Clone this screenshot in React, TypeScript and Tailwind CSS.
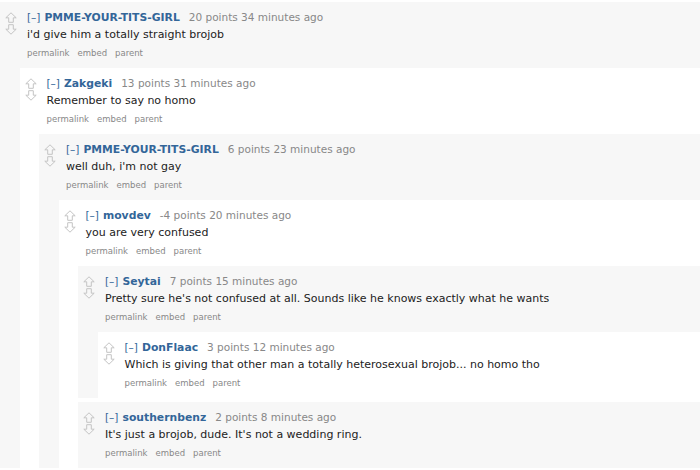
import React from 'react';

type CommentData = {
  id: string;
  author: string;
  points: number;
  age: string;
  body: string;
  replies?: CommentData[];
};

const thread: CommentData = {
  id: 'c1',
  author: 'PMME-YOUR-TITS-GIRL',
  points: 20,
  age: '34 minutes ago',
  body: "i'd give him a totally straight brojob",
  replies: [
    {
      id: 'c2',
      author: 'Zakgeki',
      points: 13,
      age: '31 minutes ago',
      body: 'Remember to say no homo',
      replies: [
        {
          id: 'c3',
          author: 'PMME-YOUR-TITS-GIRL',
          points: 6,
          age: '23 minutes ago',
          body: "well duh, i'm not gay",
          replies: [
            {
              id: 'c4',
              author: 'movdev',
              points: -4,
              age: '20 minutes ago',
              body: 'you are very confused',
              replies: [
                {
                  id: 'c5',
                  author: 'Seytai',
                  points: 7,
                  age: '15 minutes ago',
                  body: "Pretty sure he's not confused at all. Sounds like he knows exactly what he wants",
                  replies: [
                    {
                      id: 'c6',
                      author: 'DonFlaac',
                      points: 3,
                      age: '12 minutes ago',
                      body: 'Which is giving that other man a totally heterosexual brojob... no homo tho',
                    },
                  ],
                },
                {
                  id: 'c7',
                  author: 'southernbenz',
                  points: 2,
                  age: '8 minutes ago',
                  body: "It's just a brojob, dude. It's not a wedding ring.",
                },
              ],
            },
          ],
        },
      ],
    },
  ],
};

function Arrow({ down = false }: { down?: boolean }) {
  return (
    <svg width="12" height="11" viewBox="0 0 12 11" className={down ? 'rotate-180' : ''}>
      <path
        d="M6 0.8 L11.2 5.8 H8.3 V10.3 H3.7 V5.8 H0.8 Z"
        fill="none"
        stroke="#c4c4c4"
        strokeWidth="1"
        strokeLinejoin="miter"
      />
    </svg>
  );
}

function Comment({ comment, depth, first }: { comment: CommentData; depth: number; first: boolean }) {
  // odd depths are white, even depths are the light grey
  const bg = depth % 2 === 0 ? 'bg-[#f7f7f7]' : 'bg-white';

  return (
    <div className={`${bg} ${depth > 0 ? 'ml-[19.5px]' : ''} ${first ? '' : 'mt-1'}`}>
      <div className="flex h-[66px] pl-[5px] pt-2">
        {/* vote arrows */}
        <div className="flex w-3 flex-col gap-[1px] pt-[2px]">
          <Arrow />
          <Arrow down />
        </div>

        {/* entry */}
        <div className="ml-[10px] flex flex-col">
          <div className="flex h-[14px] items-baseline overflow-visible whitespace-nowrap text-[10.5px] leading-[14px]">
            <span className="text-[#369]">[–]</span>
            <span className="ml-[4px] text-[10.8px] font-bold leading-[14px] text-[#369]">{comment.author}</span>
            <span className="ml-[9px] text-[#888]">
              {comment.points} points {comment.age}
            </span>
          </div>
          <p className="mt-[3px] whitespace-nowrap text-[11px] leading-4 text-[#222]">{comment.body}</p>
          <div className="mt-[3px] flex gap-[8px] text-[8.5px] leading-[14px] text-[#888]">
            <span>permalink</span>
            <span>embed</span>
            <span>parent</span>
          </div>
        </div>
      </div>

      {comment.replies && comment.replies.length > 0 && (
        <div className="flex flex-col">
          {comment.replies.map((reply, i) => (
            <Comment key={reply.id} comment={reply} depth={depth + 1} first={i === 0} />
          ))}
        </div>
      )}
    </div>
  );
}

export default function App() {
  return (
    <div
      className="h-[470px] w-[700px] overflow-hidden bg-white pt-[2px]"
      style={{ fontFamily: '"DejaVu Sans", Verdana, sans-serif' }}
    >
      <Comment comment={thread} depth={0} first />
    </div>
  );
}
